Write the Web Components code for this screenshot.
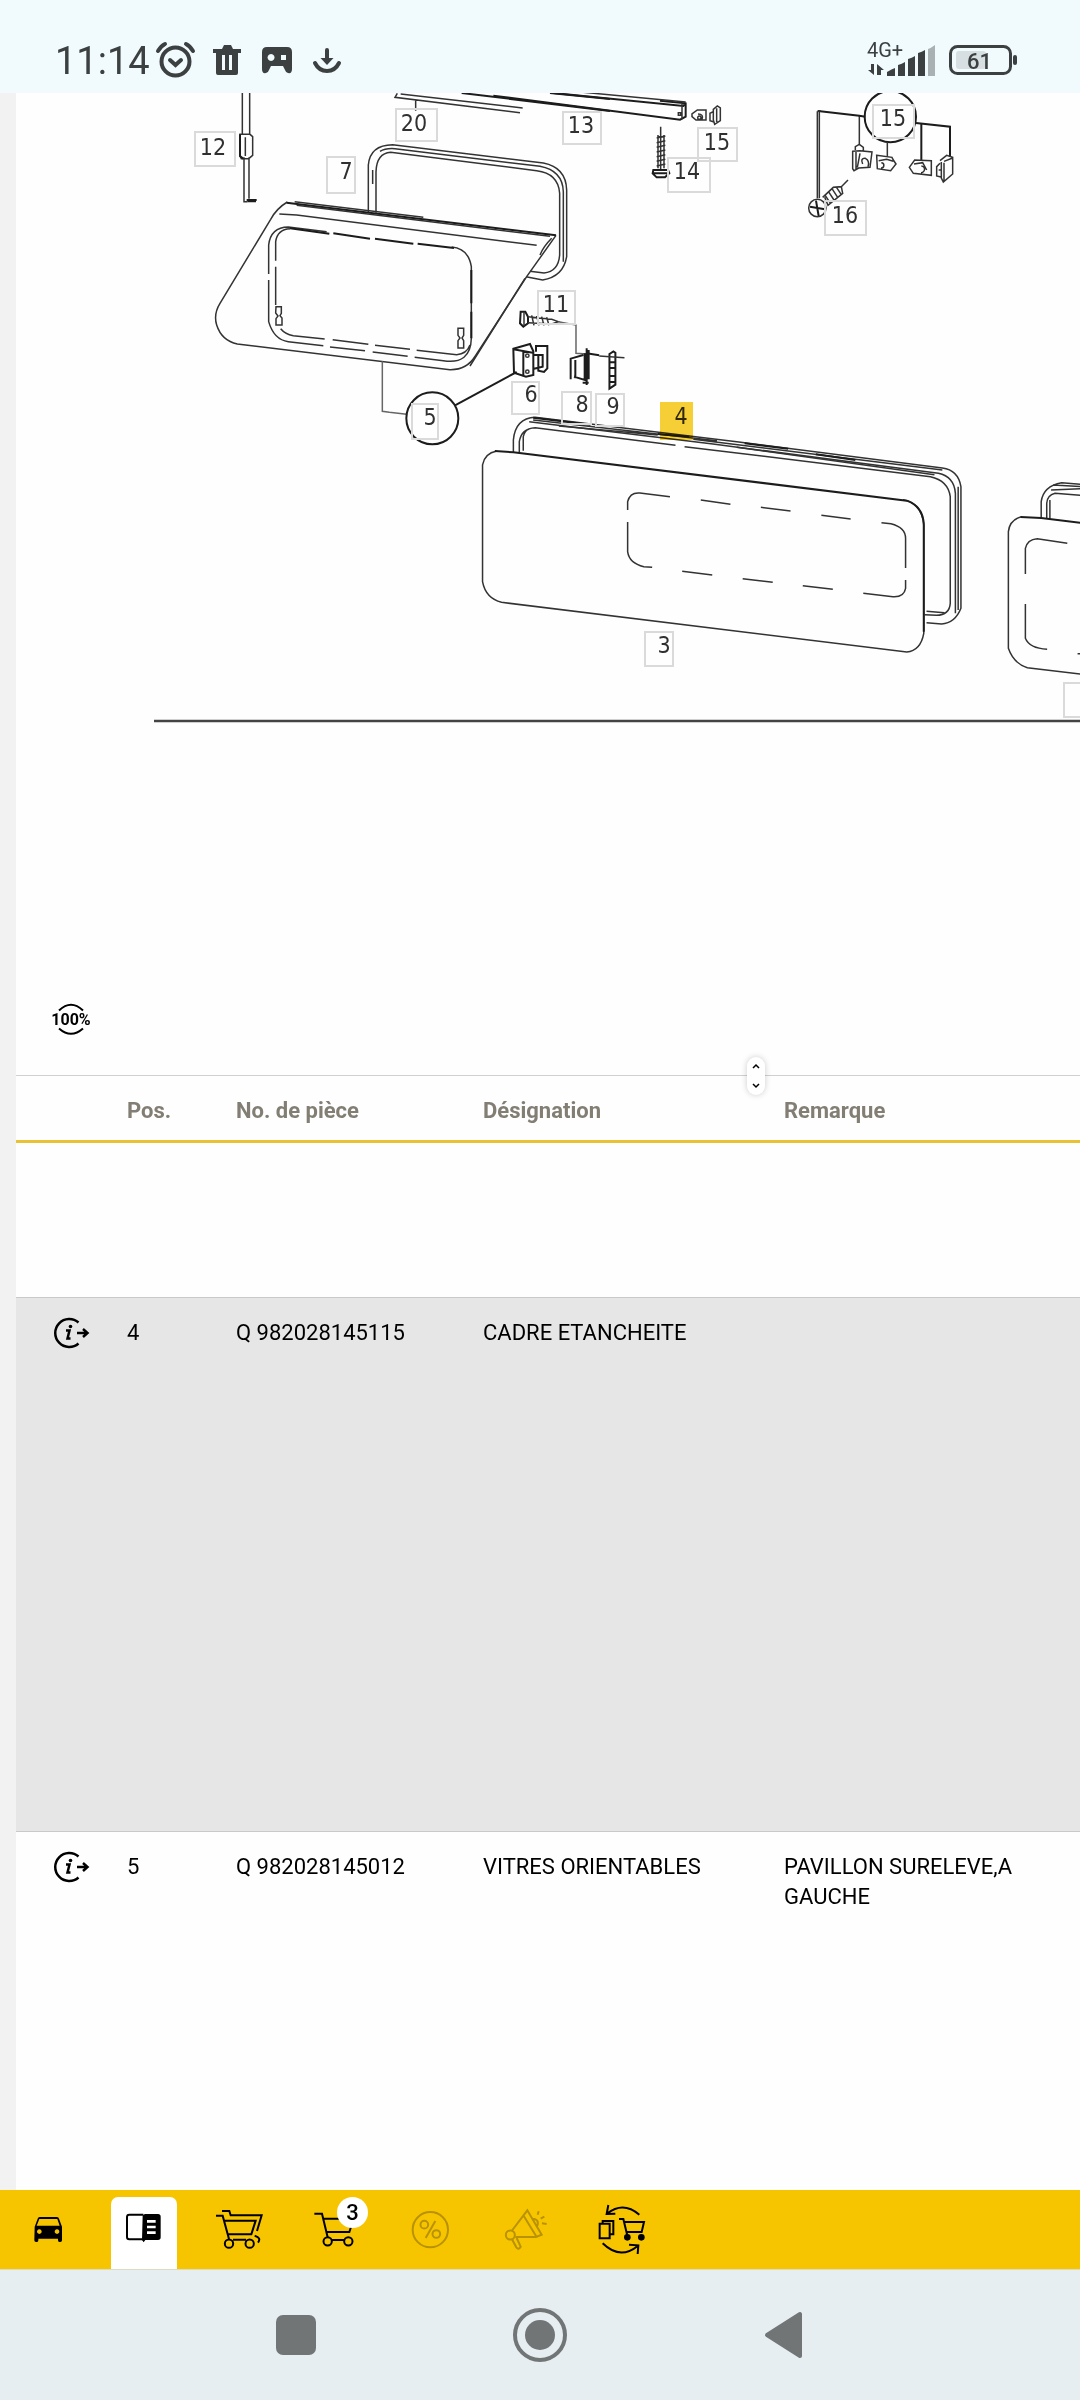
<!DOCTYPE html>
<html lang="fr">
<head>
<meta charset="utf-8">
<meta name="viewport" content="width=device-width">
<title>Catalogue de pièces</title>
<style>
html, body { margin: 0; height: 100%; }
body { font-family: Roboto, "Liberation Sans", sans-serif; background: #fff; }
</style>
</head>
<body>
<catalog-app></catalog-app>

<template id="t-app">
<style>
:host { display: flex; flex-direction: column; min-height: 100vh; }
main { flex: 1; display: flex; flex-direction: column; border-left: 16px solid #f2f2f2; min-width: 0; background: #fefefe; }
parts-table { flex: 1; }
</style>
<status-bar></status-bar>
<main>
  <parts-diagram></parts-diagram>
  <pane-splitter></pane-splitter>
  <parts-table></parts-table>
</main>
<tool-bar></tool-bar>
<nav-bar></nav-bar>
</template>

<template id="t-status">
<style>
:host { display: flex; align-items: flex-end; justify-content: space-between; height: 93px; box-sizing: border-box; padding: 0 60px 8px 55px; background: #f1fafd; color: #3c4040; }
div { display: flex; align-items: center; height: 48px; }
time { font-size: 38px; line-height: 48px; width: 95px; }
svg { display: block; fill: currentColor; }
text { font-family: Roboto, sans-serif; }
</style>
<div>
  <time>11:14</time>
  <svg width="200" height="48" viewBox="150 37 200 48">
    <circle cx="175.500" cy="61.500" r="14" fill="none" stroke="currentColor" stroke-width="4"/>
    <path d="M170 60l5.500 5 5.500-5M158 51q3-5 7-7M193 51q-3-5-7-7" fill="none" stroke="currentColor" stroke-width="4" stroke-linecap="round"/>
    <path fill-rule="evenodd" d="M213 49h9l2-4h7l2 4h8v4h-3v20q0 2-2 2h-18q-2 0-2-2V53h-3zM222 55v15h3V55zM229 55v15h3V55z"/>
    <path fill-rule="evenodd" d="M267 47h20q5 0 5 5v17q0 5-4 4-2 0-3-3l-2-4h-12l-2 4q-1 3-3 3-4 1-4-4V52q0-5 5-5zM271 54a3.500 3.500 0 1 0 .1 0zM281 55h5v5h-5z"/>
    <path d="M327 50v9M315 63q4 8 12 8t12-8" fill="none" stroke="currentColor" stroke-width="4" stroke-linecap="round"/><path d="M320.500 58h13L327 65z"/>
  </svg>
</div>
<div>
  <svg width="156" height="48" viewBox="864 37 156 48">
    <text x="867" y="57" font-size="20">4G+</text>
    <path d="M874 64v11l-6-5h3v-6zM877 75V64l7 6h-3v5z"/>
    <path d="M887 76v-4q5-3 8-4v8zM898 76V65q4-1 7-3v14zM908 76V59q4-1 7-3v20zM918 76V53q4-1 7-3v26z"/>
    <path d="M928 76V49q3-1 7-4v31z" fill="#a9b1b3"/>
    <rect x="956" y="51" width="30" height="18" rx="3" fill="#d7dfe2"/>
    <rect x="950.500" y="46.500" width="60" height="27" rx="7" fill="none" stroke="currentColor" stroke-width="3"/>
    <rect x="1013" y="55" width="4" height="10" rx="2"/>
    <text x="967" y="69" font-size="22" font-weight="500">61</text>
  </svg>
</div>
</template>

<template id="t-diagram">
<style>
:host { display: block; position: relative; overflow: hidden; height: 982px; }
svg { display: block; }
.art { fill: none; stroke: #333; stroke-width: 1.500px; }
.art * { vector-effect: non-scaling-stroke; }
.art .b { stroke-width: 2px; stroke: #1c1c1c; }
.art .l { stroke: #666; }
.nums text { font: 23px "DejaVu Sans Condensed", "DejaVu Sans", sans-serif; fill: #303030; text-anchor: middle; }
.spot { position: absolute; box-sizing: border-box; border: 2px solid #dadada; background: none; padding: 0; margin: 0; }
.spot.on { border: 0; background: #f7d037; mix-blend-mode: multiply; }
.zoom { position: absolute; left: 34px; bottom: 36px; width: 42px; height: 40px; padding: 0; border: 0; background: none; color: #000; }
.zoom text { font: bold 16px Roboto, sans-serif; text-anchor: middle; }
</style>
<svg width="1064" height="700" viewBox="16 93 1064 700" role="img" aria-label="Vue éclatée">
<g class="art">
 <g transform="translate(150 90) scale(.33333)">
  <path d="M277 0V132M299 0V132M282 202V335H292M297 202V326M270 133H300L308 140V196L296 206H274L270 198ZM286 142V198"/>
  <path class="b" d="M270 133V198L280 206M290 330H320M292 334H318"/>
  <path d="M742 10L735 22L1110 68M752 12L1118 54M797 30V62"/>
  <path class="b" d="M935 9L1380 63M1200 9L1380 27"/>
  <path d="M655 366V225Q660 165 728 164L1180 219Q1248 232 1250 300V500Q1240 560 1178 570L1128 560M678 368V245Q680 190 722 187L1160 242Q1225 250 1229 310V495Q1225 545 1182 549L1140 544M690 184Q706 174 735 176L1170 229Q1238 242 1240 305V515M668 240V282"/>
  <path d="M412 336Q380 355 362 388L210 640Q190 672 200 705Q215 752 262 762L900 839Q950 840 976 798L1130 560L1218 436"/>
  <path class="b" d="M410 338L1218 436"/><path d="M434 335L820 382M440 346L1200 439"/>
  <path d="M388 372L440 375L1160 466M1205 445Q1180 470 1170 495M960 828L1125 565"/>
  <path d="M356 552V465Q362 412 415 411L530 425M356 570V695Q372 750 415 755L520 767M540 771L645 782M668 786L773 799M794 802L880 812Q962 825 964 745V530Q955 475 905 471M377 512V455Q382 418 420 416M377 530V645M392 716Q405 732 430 737L524 747M548 749L655 763M675 766L780 778M800 781L920 794Q950 792 960 765"/>
  <path class="b" d="M420 415L538 431M550 430L660 446M675 446L790 461M803 461L912 474M964 540V640M964 665V745"/>
  <path d="M378 650H394V670L390 677L396 684V705H378V686L384 678L377 669ZM924 715H941V736L936 744L941 752V774H924V752L930 744L924 736Z"/>
  <path class="l" d="M697 814V964L718 967L770 973"/><circle class="b" cx="847" cy="985" r="78"/>
  <path class="b" d="M915 946L1100 846"/>
  <path class="b" d="M1112 665H1126L1134 680V700L1120 710L1110 700Z"/><path d="M1122 665V708M1134 680L1205 688L1225 695L1205 702L1134 698M1145 676L1152 706M1160 678L1167 706M1175 680L1182 706M1190 682L1197 706"/>
  <path class="l" d="M1225 695L1278 705V790L1310 792"/>
  <path class="b" d="M1090 776L1140 762L1150 784V855L1128 860L1092 848ZM1090 778L1148 788M1120 785V856M1158 785V768H1192V835L1182 846L1165 842V830M1152 795H1178V830L1152 836M1165 798V832M1310 775V885M1304 790V870L1272 860M1316 780V868M1298 878H1316M1262 868V806L1300 795M1276 810V865"/>
  <circle cx="1132" cy="797" r="5"/><circle cx="1132" cy="845" r="5"/>
 </g>
 <g transform="translate(500 90) scale(.33333)">
  <path class="b" d="M-20 17L540 89L557 80V40L480 32M160 9L550 48L557 38"/><path d="M230 5L557 36M535 68H542V76H535ZM546 42V88"/>
  <path d="M482 110V240M475 140H490M474 135V235M492 135V235"/><path d="M470 144L496 138M470 158L496 152M470 172L496 166M470 186L496 180M470 200L496 194M470 214L496 208M470 228L496 222"/>
  <path class="b" d="M460 240H504L508 250L495 262H470L458 250ZM458 250H508"/>
  <path d="M592 60H618V90H588L576 80V72ZM594 72Q612 72 606 88M598 78a5 5 0 1 0 .1 0M640 58L652 48L661 54V92L644 103L640 90ZM650 55V96M640 65L630 70V92L642 96"/>
 </g>
 <g transform="translate(780 90) scale(.33333)">
  <circle class="b" cx="331" cy="80" r="77"/>
  <path d="M112 64V325M118 64V325M238 78V165M322 157V198"/><path class="b" d="M114 63L238 77L256 80M408 99L510 110V200M424 103V212"/>
  <path d="M112 64L122 62M218 184L240 182L276 186L270 232L236 234L222 242L218 236ZM228 186V238M226 180V170L238 163L250 172V184M248 222Q240 204 256 205Q270 212 264 230M240 190L232 232"/>
  <path d="M290 196L336 202L340 210L348 222L332 242L292 236ZM296 212L320 208L340 214M304 218A8 8 0 1 1 303 234M388 232L404 210L454 212V256L400 250ZM402 222L428 218L440 240M424 228A9 9 0 1 1 423 248"/>
  <path d="M480 212L500 196L518 202V252L490 276L484 264V216M492 218V272M480 220L470 230V258L486 262M476 240H484M492 214L518 204"/>
  <path d="M204 270L184 290M134 322L144 346L188 310L184 290L160 292L128 322M145 304L162 330M156 296L173 322M168 290L184 314M134 314L150 338"/><circle cx="112" cy="354" r="26"/><path class="b" d="M90 350L135 358M108 332L116 378"/>
 </g>
 <g transform="translate(460 280) scale(.39537 .33333)">
  <path class="b" d="M378 222L388 214L393 218V314L378 326ZM378 247H392M378 264H392M378 288H392M378 306H392M320 220L352 226"/><path d="M352 228L416 233"/>
  <path d="M135 518V480Q140 415 190 412L700 485L1220 564Q1260 570 1267 620V985Q1252 1030 1218 1032L1180 1028M150 520V485Q155 445 190 443L545 496M568 500L1190 590Q1235 602 1240 650V970Q1238 1005 1205 1006L1175 1004M175 425L640 492L1210 580Q1250 590 1253 640V1000M160 512V470Q164 450 175 447M1180 994L1225 998M1260 620V990"/>
  <path d="M185 420L650 482M250 438L500 465M590 478L1220 570M700 502L1200 584"/>
  <path class="b" d="M185 413L330 434M500 462L580 470M720 490L830 506M900 523L1000 540"/>
  <path d="M93 513Q62 520 57 555V905Q65 955 105 967L1130 1116Q1165 1112 1173 1060V730Q1165 665 1120 659"/>
  <path class="b" d="M88 513L135 517L1130 662Q1172 680 1173 735V1055"/>
  <path d="M424 690V665Q430 636 455 639L531 650M609 660L684 673M761 682L836 693M914 706L988 717M1066 728L1090 731Q1127 742 1127 775V864M1127 900V925Q1123 952 1095 950L1020 940M943 928L867 917M791 907L715 896M638 885L562 874M486 862L465 860Q428 850 424 815V726"/>
  <path d="M1470 713V665Q1475 618 1522 608L1580 614M1484 715V670Q1485 646 1505 640L1580 647M1495 630L1580 626M1500 615L1580 620M1492 716V660"/>
  <path d="M1420 710Q1390 720 1387 755V1105Q1400 1150 1435 1163L1580 1184M1536 790L1460 776Q1435 778 1430 805V882M1430 972V1075Q1440 1105 1485 1108M1562 1121H1580"/><path class="b" d="M1418 711L1470 714L1580 730"/>
 </g>
 <path d="M154 721H1080" stroke="#444" style="stroke-width:2.500px"/>
</g>
<g class="nums">
 <text x="213" y="155">12</text><text x="414" y="131">20</text><text x="581" y="133">13</text><text x="346" y="179">7</text>
 <text x="556" y="312">11</text><text x="531" y="402">6</text><text x="582" y="412">8</text><text x="613" y="414">9</text>
 <text x="681" y="424">4</text><text x="430" y="425">5</text><text x="664" y="653">3</text><text x="687" y="179">14</text>
 <text x="717" y="150">15</text><text x="893" y="126">15</text><text x="845" y="223">16</text>
</g>
</svg>
<button class="zoom" aria-label="Zoom 100%"><svg width="42" height="40" viewBox="50 999 42 40"><path d="M59 1010.500Q71 999 83 1010.500M59 1028.500Q71 1039 83 1028.500" fill="none" stroke="#000" stroke-width="2"/><text x="71" y="1025">100%</text></svg></button>
</template>

<template id="t-splitter">
<style>
:host { display: block; position: relative; height: 1px; background: #cfd0d0; }
button { position: absolute; left: 731px; top: -18px; width: 18px; height: 38px; border: 0; border-radius: 9px; padding: 0; background: #fff; box-shadow: 0 0 6px rgba(0,0,0,.2); }
svg { display: block; fill: none; stroke: #000; stroke-width: 1.500; }
</style>
<button aria-label="Redimensionner"><svg width="18" height="38" viewBox="0 0 18 38"><path d="M6 11l3-3 3 3M6 27l3 3 3-3"/></svg></button>
</template>

<template id="t-table">
<style>
:host { display: block; }
table { width: 100%; table-layout: fixed; border-collapse: separate; border-spacing: 0; font-size: 22px; line-height: 30px; color: #000; }
th { text-align: left; font-weight: 700; color: #827e74; height: 58px; padding: 6px 0 0; border-bottom: 3px solid #e8c234; }
td { vertical-align: top; padding: 20px 0 0; box-sizing: border-box; }
tbody tr + tr td { border-top: 1px solid #c9c9c9; }
.gap td { height: 154px; }
.sel td { background: #e6e6e6; height: 534px; }
td:first-child { padding-left: 36px; }
td a { display: block; width: 38px; height: 30px; color: inherit; }
svg { display: block; fill: none; stroke: #000; stroke-width: 2.500; overflow: visible; }
.i { width: 111px; } .p { width: 109px; } .n { width: 247px; } .d { width: 301px; }
</style>
<table>
<colgroup><col class="i"><col class="p"><col class="n"><col class="d"><col></colgroup>
<thead><tr><th></th><th>Pos.</th><th>No. de pièce</th><th>Désignation</th><th>Remarque</th></tr></thead>
<tbody></tbody>
</table>
</template>

<template id="t-tools">
<style>
:host { display: flex; height: 79px; background: #f7c500; border-bottom: 1px solid #dcdcc0; }
button { position: relative; align-self: flex-end; width: 66px; height: 72px; margin: 0 15px; padding: 0; border: 0; border-radius: 7px 7px 0 0; background: none; color: #000; }
button.on { background: #fff; }
button:disabled { color: #b99202; }
svg { display: block; overflow: visible; fill: none; stroke: currentColor; stroke-width: 6; }
.f { fill: currentColor; stroke: none; }
.badge { position: absolute; top: 0; right: 1px; width: 31px; height: 31px; border-radius: 50%; background: #fff; font: 500 22px/31px Roboto, sans-serif; text-align: center; }
</style>
<button aria-label="Véhicule"><svg width="66" height="72" viewBox="45 81 198 216"><path class="f" fill-rule="evenodd" d="M104 170L113 146Q114 141 119 141H171Q176 141 177 146L186 170V211Q186 216 181 216H178Q174 216 174 211V206H115V211Q115 216 111 216H108Q103 216 103 211ZM110 167H179L172 147H118ZM118 178a7 7 0 1 0 .1 0ZM171 178a7 7 0 1 0 .1 0Z"/></svg></button>
<button class="on" aria-label="Catalogue"><svg width="66" height="72" viewBox="333 81 198 216"><path d="M430 134H388Q381 134 381 141V201Q381 208 388 208H430"/><path class="f" fill-rule="evenodd" d="M428 137Q430 132 436 132H474Q482 132 482 140V202Q482 210 474 210H436L431 217L426 210ZM441 150V158H467V150ZM441 167V175H467V167ZM441 184V192H467V184Z"/></svg></button>
<button aria-label="Paniers"><svg width="66" height="72" viewBox="621 81 198 216"><path d="M648 137H668L687 207M670 152H767L754 193H684M666 123H688L692 136H785L771 183M699 209H738M764 197Q785 203 774 218"/><circle cx="687" cy="221" r="12.500"/><circle cx="749" cy="221" r="12.500"/></svg></button>
<button aria-label="Panier"><svg width="66" height="72" viewBox="909 81 198 216"><path d="M943 131H966L983 202M969 146H1060M978 186H1048L1055 165M996 210H1034"/><circle cx="983" cy="214" r="12.500"/><circle cx="1045" cy="214" r="12.500"/></svg><span class="badge">3</span></button>
<button disabled aria-label="Promotions"><svg width="66" height="72" viewBox="177 81 198 216"><circle cx="271" cy="179" r="53"/><circle cx="253" cy="164" r="11.500"/><circle cx="289" cy="192" r="11.500"/><path d="M286 153L257 204"/></svg></button>
<button disabled aria-label="Annonces"><svg width="66" height="72" viewBox="465 81 198 216"><path d="M515 183L562 121L605 194L588 201H526M550 136L590 201M578 146Q600 148 591 170M516 208L529 232Q536 241 542 230L530 204M593 134L596 124M602 146L613 140M606 160L620 162"/><circle cx="511" cy="195" r="13.500"/></svg></button>
<button aria-label="Transfert"><svg width="66" height="72" viewBox="753 81 198 216"><path d="M898 134Q850 93 802 130M805 105L800 132L826 131M788 220Q840 271 893 228M867 224L895 226L893 252M779 161H809V205H779ZM788 160V153H820V193H811M837 147H850L863 201M853 156H912L905 186H860"/><circle class="f" cx="862" cy="202" r="10"/><circle class="f" cx="904" cy="202" r="10"/></svg></button>
</template>

<template id="t-nav">
<style>
:host { display: flex; justify-content: center; align-items: center; gap: 188px; height: 130px; background: #e6eef1; }
button { width: 56px; height: 56px; padding: 0; border: 0; background: none; color: #717575; }
svg { display: block; fill: currentColor; }
</style>
<button aria-label="Récents"><svg width="56" height="56"><rect x="8" y="8" width="40" height="40" rx="7"/></svg></button>
<button aria-label="Accueil"><svg width="56" height="56"><circle cx="28" cy="28" r="25" fill="none" stroke="currentColor" stroke-width="4"/><circle cx="28" cy="28" r="15"/></svg></button>
<button aria-label="Retour"><svg width="56" height="56"><path d="M11 28L44 7V49Z" stroke="currentColor" stroke-width="4" stroke-linejoin="round"/></svg></button>
</template>

<script>
class TemplateElement extends HTMLElement {
  constructor() {
    super();
    const t = document.getElementById(this.constructor.template);
    this.attachShadow({ mode: 'open' }).append(t.content.cloneNode(true));
  }
}
class StatusBar extends TemplateElement { static template = 't-status'; }
class PaneSplitter extends TemplateElement { static template = 't-splitter'; }
class ToolBar extends TemplateElement { static template = 't-tools'; }
class NavBar extends TemplateElement { static template = 't-nav'; }

// Clickable frames around the part numbers: [number, left, top, width, height]
const SPOTS = [
  [12, 178, 38, 42, 36], [20, 379, 15, 43, 34], [13, 546, 18, 40, 34], [7, 310, 63, 30, 38],
  [11, 521, 197, 39, 35], [6, 495, 288, 29, 34], [8, 545, 298, 31, 34], [9, 579, 300, 30, 34],
  [4, 644, 309, 33, 38], [5, 395, 310, 28, 37], [3, 628, 538, 30, 36], [14, 651, 64, 44, 36],
  [15, 681, 34, 41, 35], [15, 856, 11, 43, 35], [16, 808, 107, 43, 36], [2, 1047, 589, 40, 36]
];
class PartsDiagram extends TemplateElement {
  static template = 't-diagram';
  connectedCallback() {
    for (const [n, x, y, w, h] of SPOTS) {
      const b = document.createElement('button');
      b.className = n === 4 ? 'spot on' : 'spot';
      b.setAttribute('aria-label', 'Position ' + n);
      b.style.cssText = `left:${x}px;top:${y}px;width:${w}px;height:${h}px`;
      this.shadowRoot.append(b);
    }
  }
}

const PARTS = [
  { pos: 4, no: 'Q 982028145115', name: 'CADRE ETANCHEITE', note: '', selected: true },
  { pos: 5, no: 'Q 982028145012', name: 'VITRES ORIENTABLES', note: 'PAVILLON SURELEVE,A GAUCHE' }
];
const INFO = '<a href="#info" aria-label="Informations"><svg width="38" height="30" viewBox="53 1851 38 30"><path d="M79.500 1855.500A14 14 0 1 0 79.500 1876.500M78 1866H88M84 1862L88.500 1866L84 1870"/><path d="M67 1863.500H70.500L68.500 1871.500H71.500"/><circle cx="71.500" cy="1859.500" r="1.800" fill="#000" stroke="none"/></svg></a>';
class PartsTable extends TemplateElement {
  static template = 't-table';
  connectedCallback() {
    this.shadowRoot.querySelector('tbody').innerHTML = '<tr class="gap"><td colspan="5"></td></tr>' +
      PARTS.map(p => `<tr class="${p.selected ? 'sel' : ''}"><td>${INFO}</td><td>${p.pos}</td><td>${p.no}</td><td>${p.name}</td><td>${p.note}</td></tr>`).join('');
  }
}
class CatalogApp extends TemplateElement { static template = 't-app'; }

customElements.define('status-bar', StatusBar);
customElements.define('pane-splitter', PaneSplitter);
customElements.define('tool-bar', ToolBar);
customElements.define('nav-bar', NavBar);
customElements.define('parts-diagram', PartsDiagram);
customElements.define('parts-table', PartsTable);
customElements.define('catalog-app', CatalogApp);
</script>
</body>
</html>
